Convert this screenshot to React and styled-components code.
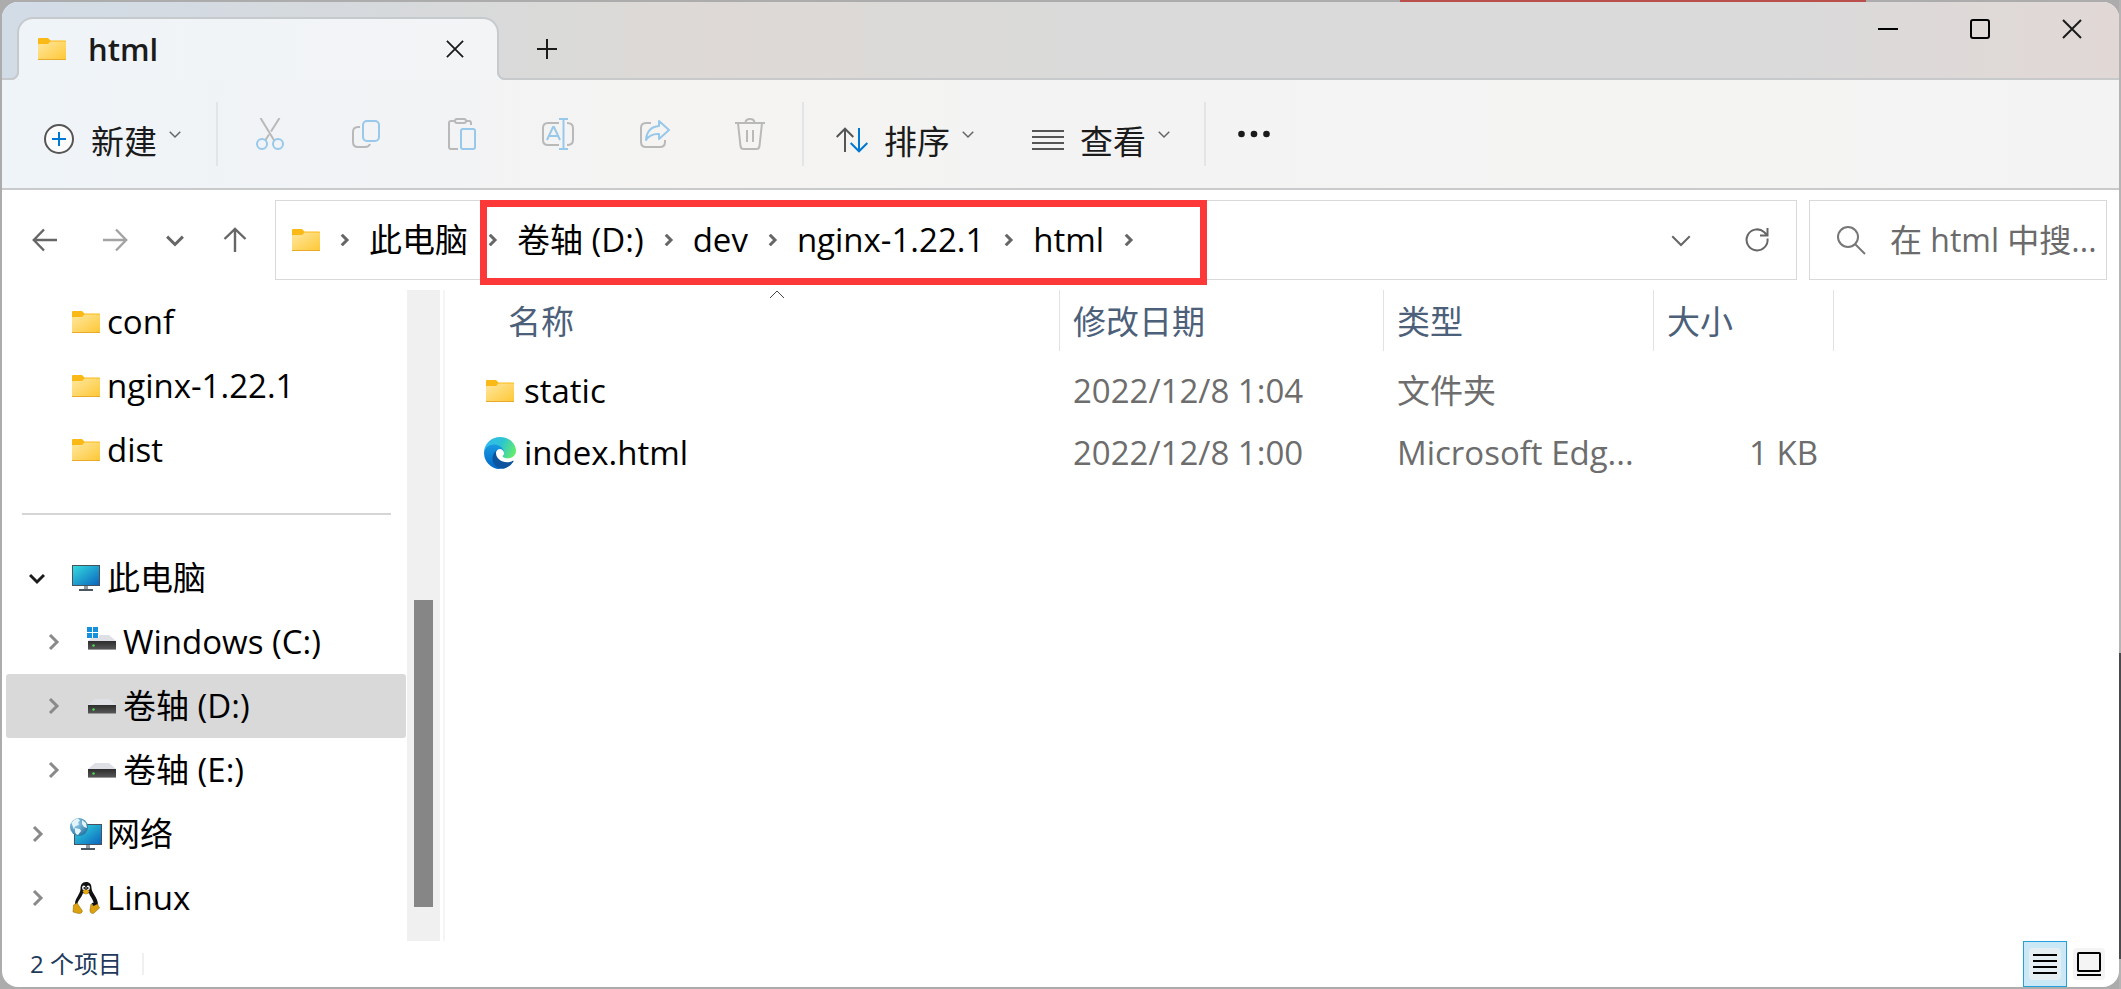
import { useState } from "react";
import styled, { createGlobalStyle } from "styled-components";

const GlobalStyle = createGlobalStyle`
  * {
    box-sizing: border-box;
  }
  body {
    margin: 0;
    font-family: "Open Sans", "Noto Sans CJK SC", sans-serif;
    font-size: 33px;
    line-height: 44px;
    color: #000;
  }
  button, input {
    font: inherit;
    color: inherit;
    border: 0;
    padding: 0;
    background: none;
  }
  svg {
    display: block;
    flex: none;
    fill: none;
  }
`;

const Desktop = styled.div`
  display: flex;
  min-height: 100vh;
  padding: 2px;
  background:
    linear-gradient(90deg, transparent 66%, #b9504c 66%, #b9504c 88%, transparent 88%) 0 0 / 100% 2px no-repeat,
    linear-gradient(#b4b4b4 66%, #4a4a4c 66%, #4a4a4c 97%, #b4b4b4 97%) 100% 0 / 2px 100% no-repeat,
    #acacac;
`;
const Window = styled.div`
  flex: 1;
  min-width: 0;
  display: flex;
  flex-direction: column;
  background: #fff;
  border-radius: 16px;
  overflow: hidden;
`;

const TitleBar = styled.header`
  display: flex;
  height: 78px;
  padding: 15px 0 0 15px;
  border-bottom: 2px solid #c8c9ca;
  background: linear-gradient(90deg, #d2dce7 0%, #d6d9dc 18%, #dadad8 26%, #ded9d6 34%, #dbdad8 44%, #dadada 52%, #dadada 84%, #ded9d8 92%, #e1d8d6 100%);
`;
const Tab = styled.div`
  position: relative;
  display: flex;
  align-items: center;
  width: 482px;
  margin-bottom: -2px;
  padding: 0 26px 2px 19px;
  border: 2px solid #c6cacd;
  border-bottom: 0;
  border-radius: 16px 16px 0 0;
  background: linear-gradient(90deg, #eff4f8, #f3f4f6);
  font-size: 31px;
  font-weight: 600;
  color: #1b1b1b;
  &::before,
  &::after {
    content: "";
    position: absolute;
    bottom: 0;
    width: 8px;
    height: 8px;
    border-bottom: 2px solid #c6cacd;
  }
  &::before {
    right: 100%;
    border-right: 2px solid #c6cacd;
    border-bottom-right-radius: 8px;
    box-shadow: 2px 2px 0 #eff4f8;
  }
  &::after {
    left: 100%;
    border-left: 2px solid #c6cacd;
    border-bottom-left-radius: 8px;
    box-shadow: -2px 2px 0 #f3f4f6;
  }
`;
const TabTitle = styled.span`
  flex: 1;
  margin-left: 22px;
`;
const IconButton = styled.button`
  display: grid;
  place-items: center;
  flex: none;
  width: ${(p) => p.$w || 32}px;
  height: ${(p) => p.$h || 48}px;
`;
const NewTab = styled(IconButton)`
  margin: 8px auto 0 32px;
`;
const Caption = styled.div`
  display: flex;
  margin: -15px 1px 0 0;
`;

const Toolbar = styled.div`
  display: flex;
  align-items: center;
  height: 110px;
  padding-left: 41px;
  border-bottom: 2px solid #c8cacb;
  background: linear-gradient(90deg, #eff4f8 0%, #f2f3f5 20%, #f5f4f2 33%, #f3f3f3 50%, #f4f4f3 84%, #f4f3f4 100%);
  color: #1b1b1b;
`;
const ToolButton = styled.button`
  display: flex;
  align-items: center;
  flex: none;
  width: ${(p) => p.$w}px;
`;
const ToolIcon = styled.span`
  padding-top: 10px;
`;
const ToolLabel = styled.span`
  margin: 16px 12px 0 16px;
`;
const ToolRule = styled.div`
  flex: none;
  width: 2px;
  height: 64px;
  background: #e3e4e5;
`;
const ToolGroup = styled.div`
  display: flex;
  gap: 64px;
  padding: 0 36px;
`;
const ToolMenus = styled.div`
  display: flex;
  padding-left: 32px;
`;

const NavRow = styled.div`
  display: flex;
  align-items: center;
  padding: 10px 12px 10px 19px;
`;
const NavButtons = styled.div`
  display: flex;
  align-items: center;
  width: 254px;
  gap: 22px;
`;
const AddressBar = styled.div`
  position: relative;
  display: flex;
  align-items: center;
  flex: 1;
  min-width: 0;
  height: 80px;
  padding: 0 19px 0 16px;
  border: 1px solid #d9d9d9;
`;
const Crumbs = styled.ol`
  display: flex;
  align-items: center;
  flex: 1;
  gap: 18px;
  margin: 0 0 0 18px;
  padding: 0;
  list-style: none;
`;
const Crumb = styled.li`
  display: flex;
  align-items: center;
  gap: 19px;
  a {
    color: #000;
    text-decoration: none;
    white-space: nowrap;
  }
`;
const Highlight = styled.div`
  position: absolute;
  top: -1px;
  left: 204px;
  width: 727px;
  height: 85px;
  border: 7px solid #fc3838;
  pointer-events: none;
`;
const SearchBox = styled.label`
  display: flex;
  align-items: center;
  gap: 24px;
  width: 298px;
  height: 80px;
  margin-left: 12px;
  padding-left: 26px;
  border: 1px solid #d9d9d9;
  font-size: 32px;
  input {
    flex: 1;
    min-width: 0;
    outline: 0;
  }
  input::placeholder {
    color: #6b6b6b;
    opacity: 1;
  }
`;

const Body = styled.div`
  display: flex;
  flex: 1;
`;
const Sidebar = styled.nav`
  width: 405px;
  padding-left: 4px;
`;
const TreeRow = styled.button`
  display: flex;
  align-items: center;
  width: 400px;
  height: 64px;
  padding-left: ${(p) => 15 + p.$depth * 16}px;
  border-radius: 3px;
  text-align: left;
  background: ${(p) => (p.$selected ? "#d9d9d9" : "transparent")};
`;
const Twisty = styled.span`
  width: 32px;
  padding-left: 8px;
`;
const IconSlot = styled.span`
  display: grid;
  place-items: center;
  width: 32px;
`;
const TreeIcon = styled(IconSlot)`
  margin: 0 5px 0 17px;
`;
const TreeRule = styled.hr`
  width: 369px;
  height: 2px;
  margin: 31px 0 31px 16px;
  border: 0;
  background: #d5d5d5;
`;
const ScrollTrack = styled.div`
  display: grid;
  grid-template-rows: 310fr 307fr 34fr;
  width: 33px;
  padding: 0 7px;
  background: #f0f0f0;
`;
const ScrollThumb = styled.div`
  grid-row: 2;
  background: #868686;
`;
const FilePane = styled.main`
  flex: 1;
  min-width: 0;
  margin-left: 3px;
  border-left: 2px solid #f5f5f5;
`;
const FileTable = styled.table`
  width: 100%;
  table-layout: fixed;
  border-collapse: collapse;
  th, td {
    padding: 0;
    text-align: left;
    font-weight: 400;
    white-space: nowrap;
  }
`;
const Col = styled.col`
  width: ${(p) => p.$w}px;
`;
const HeadCell = styled.div`
  position: relative;
  height: 61px;
  margin: 0 0 9px ${(p) => p.$inset || 0}px;
  padding: 10px 0 0 ${(p) => p.$pad || 13}px;
  border-right: 1px solid #e2e2e2;
  color: #4c607a;
`;
const SortMark = styled.span`
  position: absolute;
  top: -3px;
  left: 50%;
  margin-left: -7px;
`;
const FileName = styled.div`
  display: flex;
  align-items: center;
  gap: 8px;
  height: 62px;
  padding-left: 39px;
`;
const Detail = styled.div`
  overflow: hidden;
  padding: 0 16px 0 13px;
  text-align: ${(p) => p.$align || "left"};
  color: #6d6d6d;
`;

const StatusBar = styled.footer`
  display: flex;
  align-items: center;
  height: 46px;
  padding: 0 8px 0 28px;
  font-size: 24px;
  line-height: 32px;
  color: #1e395b;
`;
const StatusRule = styled.span`
  width: 2px;
  height: 22px;
  margin: 0 auto 0 20px;
  background: #f0f0f0;
`;
const ViewButton = styled.button`
  display: grid;
  place-items: center;
  width: 44px;
  height: 46px;
  border: 1px solid ${(p) => (p.$on ? "#26a0da" : "transparent")};
  background: ${(p) => (p.$on ? "#cbe8f6" : "transparent")};
`;
const ViewPlate = styled.span`
  display: grid;
  place-items: center;
  width: 32px;
  height: 32px;
  border-radius: 4px;
  background: ${(p) => (p.$on ? "#e4eef3" : "#f4f4f4")};
`;

const GREY = "#b9b9b9";
const PALE = "#98c8ea";

const FolderIcon = () => (
  <svg width="28" height="24" viewBox="0 0 28 24">
    <defs>
      <linearGradient id="folder" x1="0" y1="0" x2="1" y2="1">
        <stop offset="0" stopColor="#ffe7a0" />
        <stop offset="1" stopColor="#fec834" />
      </linearGradient>
    </defs>
    <path d="M0 2a1 1 0 0 1 1-1h9l2.500 2.500H27a1 1 0 0 1 1 1V10H0z" fill="#fbb917" />
    <path d="M0 8q0-1 1-1h9l2.500-2.500H27q1 0 1 1V22q0 1-1 1H1q-1 0-1-1z" fill="url(#folder)" />
    <path d="M0 22.500h28" stroke="#e9a92b" />
  </svg>
);

const Chevron = ({ dir = "down", size = 16, color = "#666", stroke = 2 }) => {
  const d = {
    down: "M1 5l7 7 7-7",
    up: "M1 11l7-7 7 7",
    right: "M5 1l7 7-7 7",
  }[dir];
  return (
    <svg width={size} height={size} viewBox="0 0 16 16">
      <path d={d} stroke={color} strokeWidth={(stroke * 16) / size} />
    </svg>
  );
};

const CloseIcon = ({ size = 20 }) => (
  <svg width={size} height={size} viewBox="0 0 20 20" stroke="#1b1b1b" strokeWidth="2">
    <path d="M1 1l18 18M19 1L1 19" />
  </svg>
);

const PlusIcon = () => (
  <svg width="20" height="20" viewBox="0 0 20 20" stroke="#1b1b1b" strokeWidth="2">
    <path d="M0 10h20M10 0v20" />
  </svg>
);

const ArrowIcon = ({ turn = 0, color = "#666" }) => (
  <svg width="26" height="26" viewBox="0 0 26 26" stroke={color} strokeWidth="2.400">
    <path transform={`rotate(${turn} 13 13)`} d="M25 13H2M12 2.500L1.800 13 12 23.500" />
  </svg>
);

const NewIcon = () => (
  <svg width="32" height="32" viewBox="0 0 32 32" strokeWidth="2">
    <circle cx="16" cy="16" r="14" fill="#fcfcfc" stroke="#555" />
    <path d="M9 16h14M16 9v14" stroke="#0078d4" />
  </svg>
);

const CutIcon = () => (
  <svg width="32" height="32" viewBox="0 0 32 32" strokeWidth="2">
    <path d="M6.500 0l14 23M25.500 0L17 13.500M15 16.500L11.500 22" stroke={GREY} />
    <circle cx="8" cy="26" r="5" stroke={PALE} />
    <circle cx="24" cy="26" r="5" stroke={PALE} />
  </svg>
);

const CopyIcon = () => (
  <svg width="32" height="32" viewBox="0 0 32 32" strokeWidth="2">
    <path d="M10 9H8q-5 0-5 5v10q0 5 5 5h7q4 0 5-3" stroke={GREY} />
    <rect x="13" y="3" width="16" height="20" rx="4" stroke={PALE} />
  </svg>
);

const PasteIcon = () => (
  <svg width="32" height="32" viewBox="0 0 32 32" strokeWidth="2">
    <path d="M9 3H5q-2 0-2 2v24q0 2 2 2h7M20 3h3q2 0 2 2v2" stroke={GREY} />
    <rect x="9" y="1" width="11" height="4" rx="2" stroke={GREY} />
    <rect x="15" y="11" width="14" height="20" rx="2" stroke={PALE} />
  </svg>
);

const RenameIcon = () => (
  <svg width="32" height="32" viewBox="0 0 32 32" strokeWidth="2">
    <path d="M17 5H6q-5 0-5 5v12q0 5 5 5h11M25 5q6 0 6 5v12q0 5-6 5" stroke={GREY} />
    <path d="M5 22l6-13h1l6 13M7.500 18h8M17 1h9M17 31h9M21.500 1v30" stroke={PALE} />
  </svg>
);

const ShareIcon = () => (
  <svg width="32" height="32" viewBox="0 0 32 32" strokeWidth="2" strokeLinejoin="round">
    <path d="M13 5H8q-5 0-5 5v14q0 5 5 5h14q5 0 5-5v-2" stroke={GREY} />
    <path d="M21 3l10 9-10 9v-5q-9-.500-13 6 1-13 13-14z" stroke={PALE} />
  </svg>
);

const DeleteIcon = () => (
  <svg width="32" height="32" viewBox="0 0 32 32" stroke={GREY} strokeWidth="2">
    <path d="M1 5h30M11.500 5q0-4 4.500-4t4.500 4M4 5l2.500 23q.500 3 3 3h13q2.500 0 3-3L28 5M13 12v12M19 12v12" />
  </svg>
);

const SortIcon = () => (
  <svg width="32" height="32" viewBox="0 0 32 32" strokeWidth="2">
    <path d="M9 29V6M.700 14L9 5.700 17.300 14" stroke="#555" />
    <path d="M23 5v23M14.700 20l8.300 8.300 8.300-8.300" stroke="#0078d4" />
  </svg>
);

const ViewIcon = () => (
  <svg width="32" height="32" viewBox="0 0 32 32" stroke="#555" strokeWidth="2">
    <path d="M0 8h32M0 14h32M0 20h32M0 26h32" />
  </svg>
);

const MoreIcon = () => (
  <svg width="32" height="8" viewBox="0 0 32 8">
    <circle cx="3.500" cy="4" r="3.300" fill="#1b1b1b" />
    <circle cx="16" cy="4" r="3.300" fill="#1b1b1b" />
    <circle cx="28.500" cy="4" r="3.300" fill="#1b1b1b" />
  </svg>
);

const RefreshIcon = () => (
  <svg width="26" height="26" viewBox="0 0 26 26" stroke="#666" strokeWidth="2">
    <path d="M23.500 11.500A10.500 10.500 0 1 1 20 5l3 3M23.500 1v7.500H16" />
  </svg>
);

const SearchIcon = () => (
  <svg width="30" height="30" viewBox="0 0 30 30" stroke="#777" strokeWidth="2">
    <circle cx="12" cy="12" r="10" />
    <path d="M19 19l10 10" />
  </svg>
);

const Screen = ({ x, y, w }) => (
  <g>
    <rect x={x + 0.5} y={y + 0.5} width={w - 1} height="20" fill="url(#screen)" stroke="#46535e" />
    <path d={`M${x + w / 2 - 2} ${y + 21}h4v3h-4z`} fill="#8f9aa3" />
    <path d={`M${x + w / 2 - 7} ${y + 24}h14v2h-14z`} fill="#4b5660" />
  </g>
);

const ScreenFill = () => (
  <defs>
    <linearGradient id="screen" x1="0" y1="0" x2="1" y2="1">
      <stop offset="0" stopColor="#35dde0" />
      <stop offset="1" stopColor="#0a63bd" />
    </linearGradient>
  </defs>
);

const ComputerIcon = () => (
  <svg width="32" height="32" viewBox="0 0 32 32">
    <ScreenFill />
    <Screen x={2} y={3} w={28} />
  </svg>
);

const NetworkIcon = () => (
  <svg width="32" height="32" viewBox="0 0 32 32">
    <ScreenFill />
    <defs>
      <radialGradient id="globe" cx=".35" cy=".3" r=".8">
        <stop offset="0" stopColor="#9bd3ee" />
        <stop offset="1" stopColor="#1e6c9d" />
      </radialGradient>
    </defs>
    <Screen x={4} y={6} w={28} />
    <circle cx="9" cy="9" r="9" fill="url(#globe)" />
    <path d="M1.500 5Q4 1 8 .500l2 2-2 2 1 2-4 2-1 3z" fill="#e4f4fb" />
    <path d="M5 10l5 1 1 2-3 4q-3-1-3-4zM12 2l4 3 1 5-3-1-2-3z" fill="#e4f4fb" />
  </svg>
);

const DriveIcon = ({ system }) => (
  <svg width="32" height="32" viewBox="0 0 32 32">
    <defs>
      <linearGradient id="drive" x1="0" y1="0" x2="0" y2="1">
        <stop offset="0" stopColor="#2d2d2d" />
        <stop offset="1" stopColor="#5a5a5a" />
      </linearGradient>
    </defs>
    <path d="M9 9h14l7 6H2z" fill="#dfe0e5" />
    <rect x="2" y="15" width="28" height="9" fill="url(#drive)" />
    <path d="M2 23.500h28" stroke="#999" />
    <circle cx="7.500" cy="19.500" r="1.200" fill="#4be04b" />
    {system && (
      <>
        <rect x="0" y="0" width="13" height="12" fill="#fff" />
        <path d="M1 1h5v5H1zM7 1h5v5H7zM1 7h5v5H1zM7 7h5v5H7z" fill="#1490df" />
      </>
    )}
  </svg>
);

const TuxIcon = () => (
  <svg width="32" height="32" viewBox="0 0 32 32">
    <path d="M16 0c4 0 5.500 2.500 5.500 6 0 5 6.500 9 6.500 17l-4 6H8l-3-7c0-6 5.500-10 5.500-15C10.500 3 12 0 16 0z" fill="#111" />
    <path d="M13 11q3 2 6 0c1 4 5.500 7 5 14l-3 5H10l-3-6c0-5 4.500-8 6-13z" fill="#fff" />
    <ellipse cx="13.800" cy="5.800" rx="1.700" ry="2.200" fill="#fff" />
    <ellipse cx="18.200" cy="5.800" rx="1.700" ry="2.200" fill="#fff" />
    <circle cx="14.300" cy="6" r=".900" fill="#111" />
    <circle cx="17.700" cy="6" r=".900" fill="#111" />
    <path d="M12.500 9q3.500-3 7 0-2 3.500-3.500 3.500T12.500 9z" fill="#e6a817" />
    <path d="M3.500 23l3.500-2 5.500 8q-.500 3-4 2.500L3 30z" fill="#dca10f" stroke="#8a6400" strokeWidth=".500" />
    <path d="M21 22l3 1.500 3.500-1.500 2 4-6 5.500q-4 0-3.500-4z" fill="#dca10f" stroke="#8a6400" strokeWidth=".500" />
    <path d="M21.500 21q4-1 5 1l-3 2z" fill="#111" />
  </svg>
);

const EdgeIcon = () => (
  <svg width="32" height="32" viewBox="0 0 256 256">
    <defs>
      <linearGradient id="edgeTop" x1="0" y1=".3" x2="1" y2=".6">
        <stop offset="0" stopColor="#35b8f1" />
        <stop offset=".5" stopColor="#2bc4d2" />
        <stop offset="1" stopColor="#66eb6e" />
      </linearGradient>
      <linearGradient id="edgeMid" x1=".5" y1="0" x2=".5" y2="1">
        <stop offset="0" stopColor="#1b9de2" />
        <stop offset="1" stopColor="#0067c8" />
      </linearGradient>
    </defs>
    <path
      fill="#0d539e"
      d="M231 190.500c-3.400 1.800-6.900 3.400-10.500 4.700a101.500 101.500 0 0 1-35.900 6.500c-47.300 0-88.500-32.500-88.500-74.300.1-11.400 6.400-21.900 16.400-27.300-42.800 1.800-53.800 46.400-53.800 72.500 0 74 68.100 81.400 82.800 81.400 7.900 0 19.800-2.300 27-4.600l1.300-.4a128.300 128.300 0 0 0 66.600-52.800 4 4 0 0 0-5.400-5.700z"
    />
    <path
      fill="url(#edgeMid)"
      d="M105.700 241.400A79.200 79.200 0 0 1 83 220.100a80.700 80.700 0 0 1 29.500-120c3.200-1.500 8.500-4.100 15.600-4a32.400 32.400 0 0 1 25.700 13 31.900 31.900 0 0 1 6.300 18.700c0-.2 24.500-79.600-80-79.600-43.900 0-80 41.700-80 78.200a130.200 130.200 0 0 0 12.100 56 128 128 0 0 0 156.400 67 75.500 75.500 0 0 1-62.800-8z"
    />
    <path
      fill="url(#edgeTop)"
      d="M152.300 148.900c-.9 1-3.300 2.500-3.300 5.700 0 2.600 1.700 5.100 4.700 7.200 14.400 10 41.500 8.700 41.600 8.700 10.700 0 21.100-2.900 30.300-8.300A61.400 61.400 0 0 0 256 109.300c.3-22.400-8-37.300-11.300-43.900C223.500 23.900 177.700 0 128 0A128 128 0 0 0 0 126.200c.5-36.500 36.800-66 80-66 3.500 0 23.500.3 42 10a72.600 72.600 0 0 1 30.900 29.300c6.100 10.600 7.200 24.100 7.200 29.500s-2.700 13.300-7.800 19.900z"
    />
  </svg>
);

const tools = [
  { name: "剪切", icon: <CutIcon /> },
  { name: "复制", icon: <CopyIcon /> },
  { name: "粘贴", icon: <PasteIcon /> },
  { name: "重命名", icon: <RenameIcon /> },
  { name: "共享", icon: <ShareIcon /> },
  { name: "删除", icon: <DeleteIcon /> },
];

const crumbs = ["此电脑", "卷轴 (D:)", "dev", "nginx-1.22.1", "html"];

const pinned = ["conf", "nginx-1.22.1", "dist"];

const tree = [
  { name: "此电脑", icon: <ComputerIcon />, depth: 0, open: true },
  { name: "Windows (C:)", icon: <DriveIcon system />, depth: 1 },
  { name: "卷轴 (D:)", icon: <DriveIcon />, depth: 1 },
  { name: "卷轴 (E:)", icon: <DriveIcon />, depth: 1 },
  { name: "网络", icon: <NetworkIcon />, depth: 0 },
  { name: "Linux", icon: <TuxIcon />, depth: 0 },
];

const files = [
  { name: "static", icon: <FolderIcon />, date: "2022/12/8 1:04", type: "文件夹", size: "" },
  { name: "index.html", icon: <EdgeIcon />, date: "2022/12/8 1:00", type: "Microsoft Edg...", size: "1 KB" },
];

const MenuButton = ({ icon, label, width }) => (
  <ToolButton $w={width}>
    <ToolIcon>{icon}</ToolIcon>
    <ToolLabel>{label}</ToolLabel>
    <Chevron size={12} stroke={1.5} />
  </ToolButton>
);

const FileList = () => (
  <FileTable>
    <colgroup>
      <Col $w={615} />
      <Col $w={324} />
      <Col $w={270} />
      <Col $w={180} />
      <col />
    </colgroup>
    <thead>
      <tr>
        <th>
          <HeadCell $inset={48} $pad={15}>
            名称
            <SortMark>
              <Chevron dir="up" stroke={1} color="#444" />
            </SortMark>
          </HeadCell>
        </th>
        <th><HeadCell>修改日期</HeadCell></th>
        <th><HeadCell>类型</HeadCell></th>
        <th><HeadCell>大小</HeadCell></th>
        <th></th>
      </tr>
    </thead>
    <tbody>
      {files.map((f) => (
        <tr key={f.name}>
          <td><FileName><IconSlot>{f.icon}</IconSlot>{f.name}</FileName></td>
          <td><Detail>{f.date}</Detail></td>
          <td><Detail>{f.type}</Detail></td>
          <td><Detail $align="right">{f.size}</Detail></td>
          <td></td>
        </tr>
      ))}
    </tbody>
  </FileTable>
);

export default function App() {
  const [selected, setSelected] = useState("卷轴 (D:)");
  const [view, setView] = useState("details");

  return (
    <Desktop>
      <GlobalStyle />
      <Window>
        <TitleBar>
          <Tab>
            <FolderIcon />
            <TabTitle>html</TabTitle>
            <IconButton aria-label="关闭标签页"><CloseIcon size={18} /></IconButton>
          </Tab>
          <NewTab aria-label="新标签页"><PlusIcon /></NewTab>
          <Caption>
            <IconButton $w={92} $h={54} aria-label="最小化">
              <svg width="20" height="20" stroke="#000" strokeWidth="2"><path d="M0 10h20" /></svg>
            </IconButton>
            <IconButton $w={92} $h={54} aria-label="最大化">
              <svg width="20" height="20" stroke="#000" strokeWidth="2"><rect x="1" y="1" width="18" height="18" rx="2" /></svg>
            </IconButton>
            <IconButton $w={92} $h={54} aria-label="关闭"><CloseIcon /></IconButton>
          </Caption>
        </TitleBar>

        <Toolbar>
          <MenuButton icon={<NewIcon />} label="新建" width={173} />
          <ToolRule />
          <ToolGroup>
            {tools.map((t) => (
              <IconButton key={t.name} aria-label={t.name} disabled>{t.icon}</IconButton>
            ))}
          </ToolGroup>
          <ToolRule />
          <ToolMenus>
            <MenuButton icon={<SortIcon />} label="排序" width={196} />
            <MenuButton icon={<ViewIcon />} label="查看" width={172} />
          </ToolMenus>
          <ToolRule />
          <IconButton $w={96} aria-label="更多"><MoreIcon /></IconButton>
        </Toolbar>

        <NavRow>
          <NavButtons>
            <IconButton $w={48} aria-label="后退"><ArrowIcon /></IconButton>
            <IconButton $w={48} aria-label="前进"><ArrowIcon turn={180} color="#a3a3a3" /></IconButton>
            <IconButton $w={28} aria-label="最近的位置"><Chevron size={18} stroke={3} /></IconButton>
            <IconButton $w={48} aria-label="上移"><ArrowIcon turn={90} /></IconButton>
          </NavButtons>
          <AddressBar>
            <FolderIcon />
            <Crumbs>
              {crumbs.map((c) => (
                <Crumb key={c}>
                  <Chevron dir="right" size={12} stroke={3} />
                  <a href="#">{c}</a>
                </Crumb>
              ))}
              <li><Chevron dir="right" size={12} stroke={3} /></li>
            </Crumbs>
            <IconButton $w={112} aria-label="以前的位置"><Chevron size={20} /></IconButton>
            <IconButton $w={40} aria-label="刷新"><RefreshIcon /></IconButton>
            <Highlight />
          </AddressBar>
          <SearchBox>
            <SearchIcon />
            <input type="text" aria-label="搜索" placeholder="在 html 中搜..." />
          </SearchBox>
        </NavRow>

        <Body>
          <Sidebar>
            {pinned.map((name) => (
              <TreeRow key={name} $depth={0} onClick={() => setSelected(name)} $selected={selected === name}>
                <Twisty />
                <TreeIcon><FolderIcon /></TreeIcon>
                {name}
              </TreeRow>
            ))}
            <TreeRule />
            {tree.map((n) => (
              <TreeRow key={n.name} $depth={n.depth} onClick={() => setSelected(n.name)} $selected={selected === n.name}>
                <Twisty>
                  <Chevron dir={n.open ? "down" : "right"} stroke={3} color={n.open ? "#1b1b1b" : "#8a8a8a"} />
                </Twisty>
                <TreeIcon>{n.icon}</TreeIcon>
                {n.name}
              </TreeRow>
            ))}
          </Sidebar>
          <ScrollTrack>
            <ScrollThumb />
          </ScrollTrack>
          <FilePane>
            <FileList />
          </FilePane>
        </Body>

        <StatusBar>
          2 个项目
          <StatusRule />
          <ViewButton $on={view === "details"} onClick={() => setView("details")} aria-label="详细信息">
            <ViewPlate $on={view === "details"}>
              <svg width="24" height="24" stroke="#000" strokeWidth="2"><path d="M0 3h24M0 9h24M0 15h24M0 21h24" /></svg>
            </ViewPlate>
          </ViewButton>
          <ViewButton $on={view === "icons"} onClick={() => setView("icons")} aria-label="大图标">
            <ViewPlate $on={view === "icons"}>
              <svg width="24" height="24" stroke="#000" strokeWidth="2"><rect x="1" y="1" width="22" height="18" rx="1" /><path d="M0 23h24" /></svg>
            </ViewPlate>
          </ViewButton>
        </StatusBar>
      </Window>
    </Desktop>
  );
}
